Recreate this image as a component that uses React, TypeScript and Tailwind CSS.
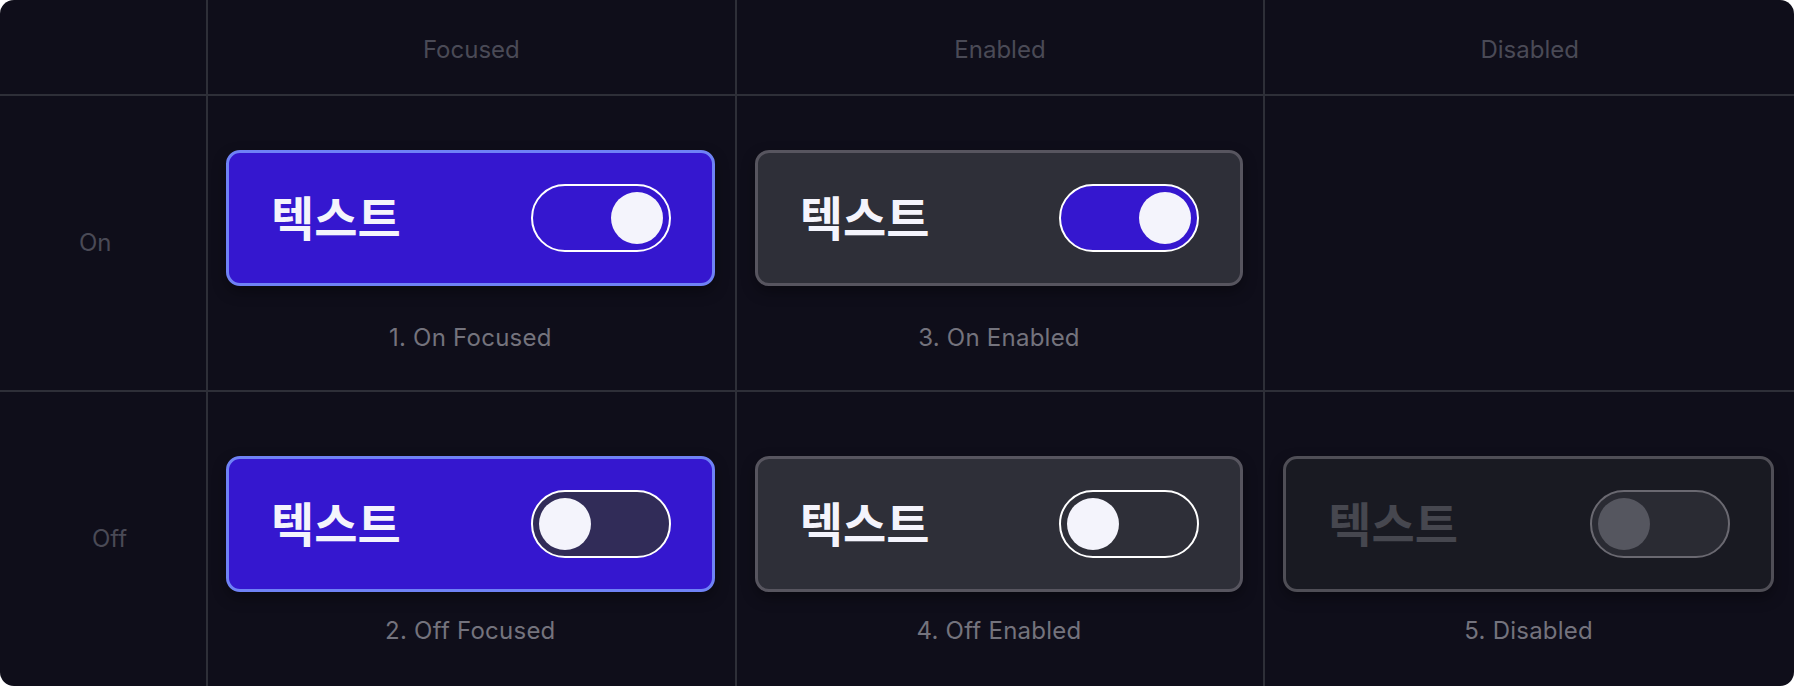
import React from "react";

type Variant = "focused" | "enabled" | "disabled";

const CARD_STYLES: Record<Variant, string> = {
  focused: "border-[#6f82f6] bg-[#3517cf] text-[#f4f4fc]",
  enabled: "border-[#57555f] bg-[#2e2f38] text-[#f4f4fc]",
  disabled: "border-[#4f4e56] bg-[#191a22] text-[#46474f]",
};

function Toggle({ on, variant }: { on: boolean; variant: Variant }) {
  let track = "";
  let knob = "bg-[#f4f4fc]";
  if (variant === "focused") track = on ? "bg-[#3517cf] border-white" : "bg-[#312c58] border-white";
  if (variant === "enabled") track = on ? "bg-[#3517cf] border-white" : "bg-[#2e2f38] border-white";
  if (variant === "disabled") {
    track = "bg-[#2a2b33] border-[#6a6971]";
    knob = "bg-[#55565f]";
  }
  return (
    <div
      className={`flex h-[68px] w-[140px] shrink-0 items-center rounded-full border-2 p-[6px] ${track} ${
        on ? "justify-end" : "justify-start"
      }`}
    >
      <div className={`h-[52px] w-[52px] rounded-full ${knob}`} />
    </div>
  );
}

function SwitchCard({ on, variant }: { on: boolean; variant: Variant }) {
  return (
    <div
      className={`flex h-[136px] w-full items-center justify-between rounded-[14px] border-[3px] pl-[42px] pr-[41px] shadow-[0_6px_14px_rgba(0,0,0,0.35)] ${CARD_STYLES[variant]}`}
    >
      <span className="mb-[6px] font-['Noto_Sans_CJK_KR',sans-serif] text-[47px] font-semibold leading-none">
        텍스트
      </span>
      <Toggle on={on} variant={variant} />
    </div>
  );
}

function Cell({
  caption,
  on,
  variant,
  top,
  gap,
  last,
  bottom,
}: {
  caption: string;
  on: boolean;
  variant: Variant;
  top: string;
  gap: string;
  last?: boolean;
  bottom?: boolean;
}) {
  return (
    <div
      className={`flex flex-col items-center border-[#2e2f38] pl-[18px] pr-5 ${top} ${last ? "" : "border-r-2"} ${
        bottom ? "" : "border-b-2"
      }`}
    >
      <SwitchCard on={on} variant={variant} />
      <p className={`${gap} text-[24px] leading-[30px] tracking-[0.01em] text-[#74737d]`}>{caption}</p>
    </div>
  );
}

export default function App() {
  return (
    <div className="h-[686px] w-[1794px] bg-white">
      <div className="grid h-full w-full grid-cols-[208px_1fr_1fr_1fr] grid-rows-[96px_296px_1fr] overflow-hidden rounded-[14px] bg-[#0f0e1a] font-['Inter',sans-serif]">
        {/* header row */}
        <div className="border-r-2 border-b-2 border-[#2e2f38]" />
        {["Focused", "Enabled", "Disabled"].map((h, i) => (
          <div
            key={h}
            className={`flex items-center justify-center border-b-2 border-[#2e2f38] pt-[5px] text-[24px] text-[#4a4a56] ${
              i < 2 ? "border-r-2" : ""
            }`}
          >
            {h}
          </div>
        ))}

        {/* on row */}
        <div className="flex items-center border-r-2 border-b-2 border-[#2e2f38] pl-[79px] text-[24px] text-[#4a4a56]">
          On
        </div>
        <Cell caption="1. On Focused" on variant="focused" top="pt-[54px]" gap="mt-[37px]" />
        <Cell caption="3. On Enabled" on variant="enabled" top="pt-[54px]" gap="mt-[37px]" />
        <div className="border-b-2 border-[#2e2f38]" />

        {/* off row */}
        <div className="flex items-center border-r-2 border-[#2e2f38] pl-[92px] text-[24px] text-[#4a4a56]">
          Off
        </div>
        <Cell caption="2. Off Focused" on={false} variant="focused" top="pt-[64px]" gap="mt-[24px]" bottom />
        <Cell caption="4. Off Enabled" on={false} variant="enabled" top="pt-[64px]" gap="mt-[24px]" bottom />
        <Cell caption="5. Disabled" on={false} variant="disabled" top="pt-[64px]" gap="mt-[24px]" bottom last />
      </div>
    </div>
  );
}
